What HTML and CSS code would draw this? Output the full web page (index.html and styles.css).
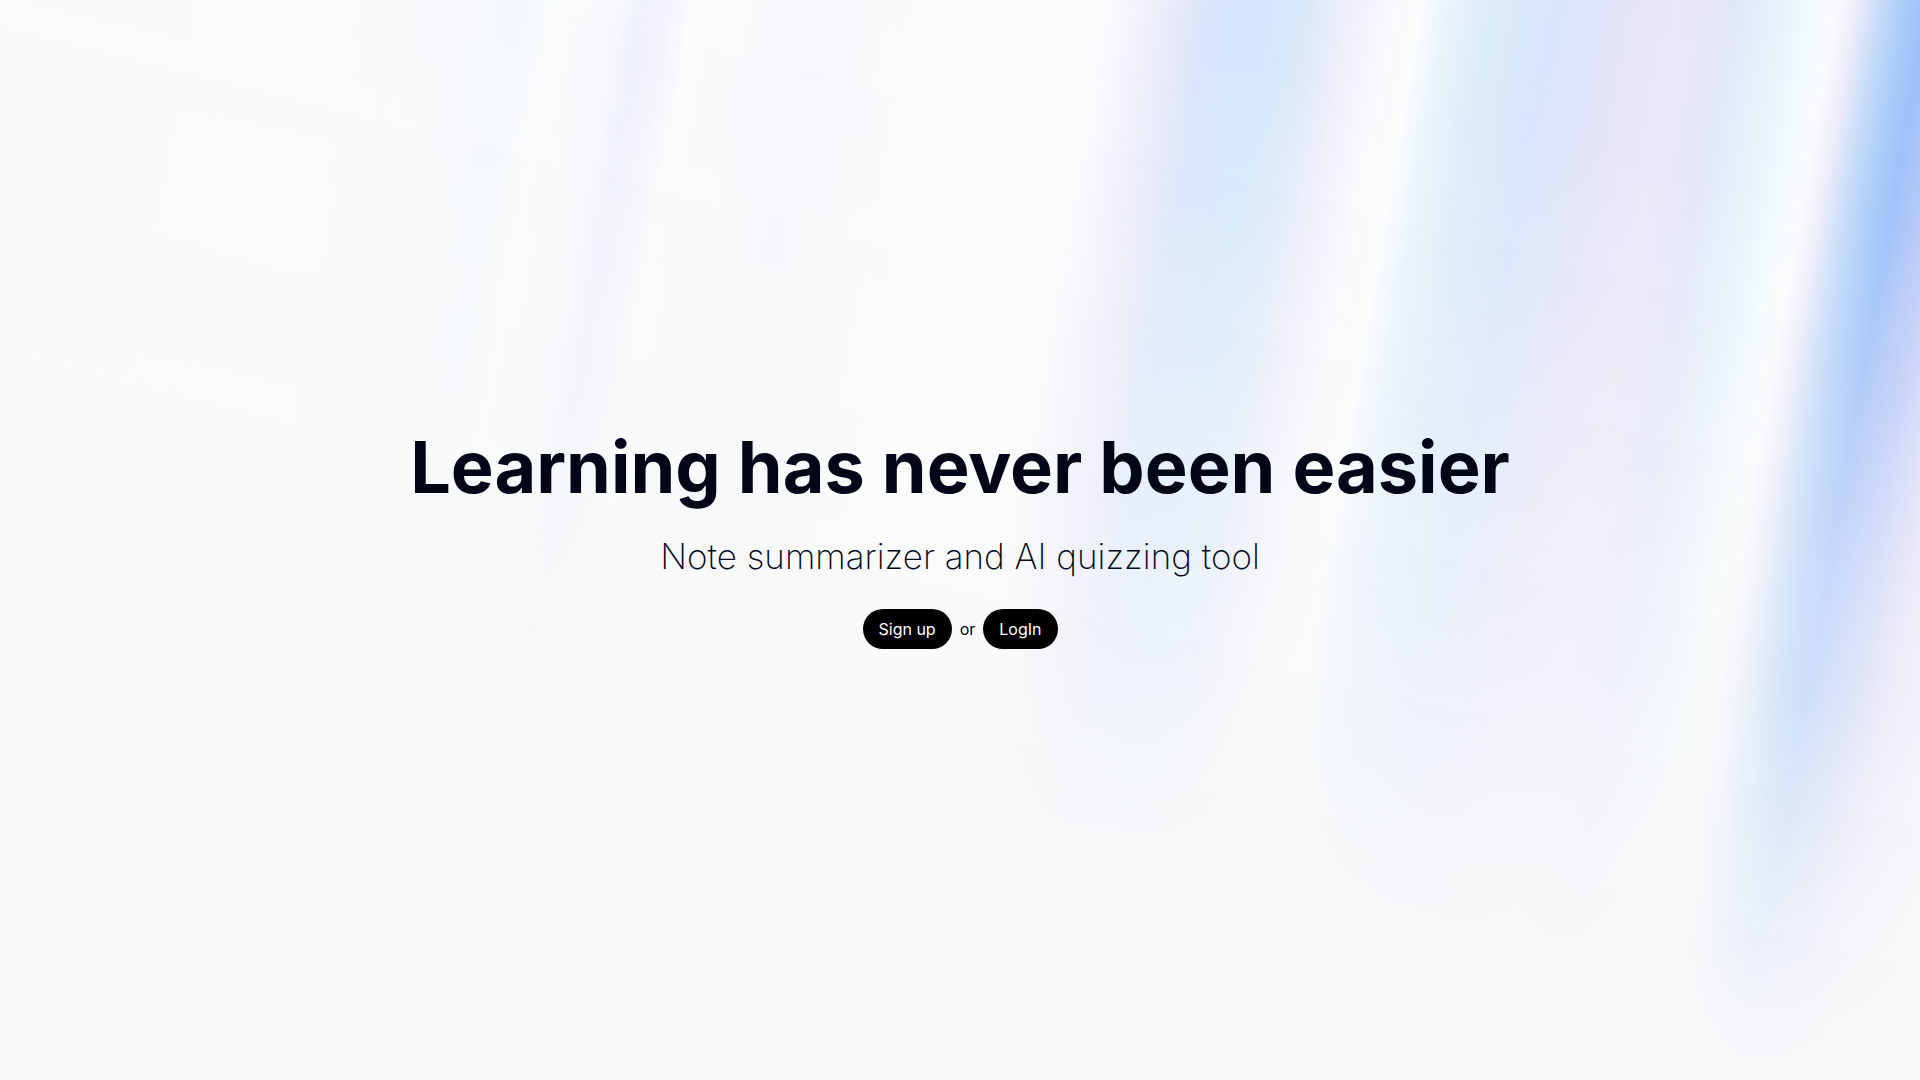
FILE: index.html
```
<!DOCTYPE html>
<html lang="en">
<head>
  <meta charset="utf-8">
  <meta name="viewport" content="width=device-width, initial-scale=1">
  <title>Note summarizer and AI quizzing tool</title>
  <link rel="stylesheet" href="styles.css">
</head>
<body>
  <main class="hero">
    <h1 class="hero-title">Learning has never been easier</h1>
    <p class="hero-subtitle">Note summarizer and AI quizzing tool</p>
    <div class="hero-actions">
      <button class="button" type="button">Sign up</button>
      <span>or</span>
      <button class="button" type="button">LogIn</button>
    </div>
  </main>
</body>
</html>
```
FILE: styles.css
```
* {
  box-sizing: border-box;
}

body {
  margin: 0;
  background: #fafafa;
  color: #020617;
  font-family: Inter, "Liberation Sans", sans-serif;
  font-size: 16px;
  line-height: 24px;
}

.hero {
  position: relative;
  isolation: isolate;
  min-height: 100vh;
  padding: 16px;
  display: flex;
  flex-direction: column;
  align-items: center;
  justify-content: center;
  gap: 32px;
  text-align: center;
}

/* Slanted aurora bands that fade out towards the lower left */
.hero::before {
  content: "";
  position: absolute;
  inset: 0;
  z-index: -1;
  background: linear-gradient(100deg,
    #fafafa 0%, #fafbfb 16.4%, #f7f9fc 21.3%, #f2f8fc 24.8%, #fafcfc 26.5%,
    #f5f7fc 29.4%, #eceffb 30.5%, #f3f2fb 31.8%, #fafbfc 32.9%, #f8fafc 35.3%,
    #f6f6fc 38.7%, #f9fafc 42.5%, #fcfcfd 44.8%,
    #fcfcfe 52.3%, #eeeffb 54.6%, #e3e6f9 56.3%, #d6e3fc 57.5%, #d3e6fc 60.4%,
    #dbe8fa 62.2%, #eeedfb 63.9%, #fbf8fc 65.9%, #fafcfd 67.4%,
    #e8f3fb 68.8%, #dcebf9 70.6%, #d7e4fc 73.5%, #e2e3fa 76.7%, #ebe6fa 79.6%,
    #e2e6fa 82.2%, #e9f2fb 84.5%, #f3fbfc 86%, #fafafd 87.1%,
    #eeecfa 88%, #c8dcf9 89.1%, #aacbf9 90.3%, #9dbff9 91.4%,
    #c0cbf8 93.5%, #e3dffa 95.5%, #eff0fa 98%, #f8f8fa 100%);
  mask-image: linear-gradient(194deg,
    #000 0%, rgb(0 0 0 / 95%) 15%, rgb(0 0 0 / 80%) 25%, rgb(0 0 0 / 60%) 36%,
    rgb(0 0 0 / 45%) 47%, rgb(0 0 0 / 24%) 58%, rgb(0 0 0 / 8%) 67%,
    transparent 74%);
}

.hero-title {
  margin: 0;
  font-size: 72px;
  font-weight: 700;
  line-height: 72px;
}

.hero-subtitle {
  margin: 0;
  font-size: 35px;
  font-weight: 200;
  line-height: 42px;
}

.hero-actions {
  display: flex;
  align-items: center;
  gap: 8px;
}

.button {
  height: 40px;
  padding: 0 16px;
  border: 0;
  border-radius: 20px;
  background: #000;
  color: #fff;
  font: inherit;
  cursor: pointer;
}
```
